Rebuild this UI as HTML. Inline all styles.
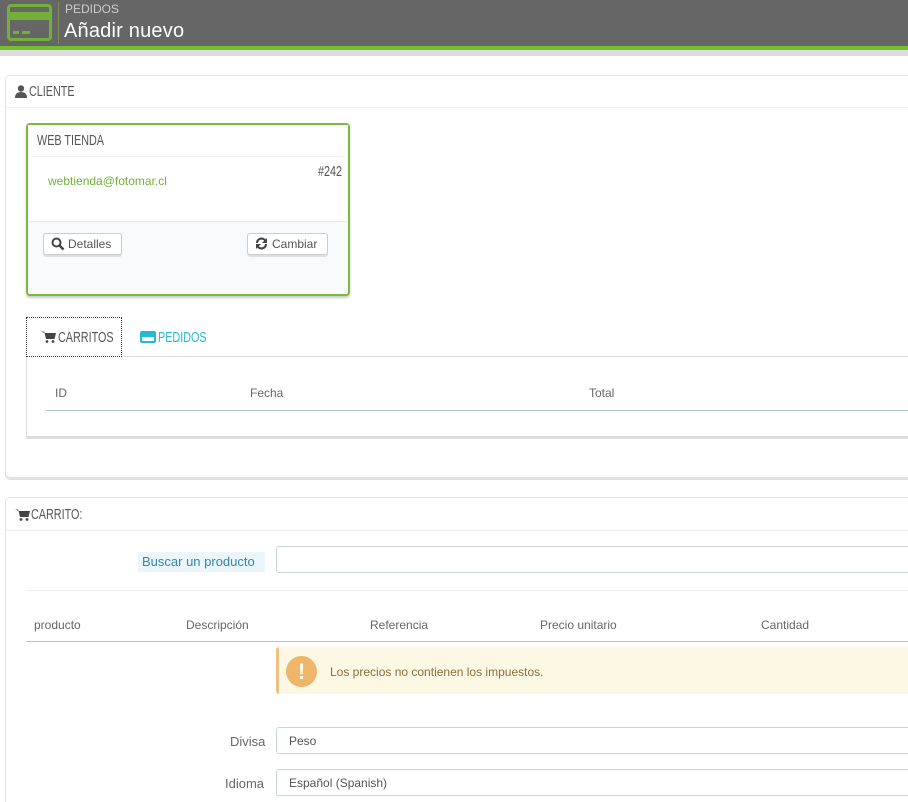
<!DOCTYPE html>
<html><head><meta charset="utf-8"><style>
*{box-sizing:border-box;margin:0;padding:0}
html,body{width:908px;height:802px;overflow:hidden}
body{background:#fff;font-family:"Liberation Sans",sans-serif;position:relative;color:#555}
.a{position:absolute}
.hd{left:0;top:0;width:908px;height:46px;background:#666}
.panel{border:1px solid #e3e3e3;border-radius:5px;box-shadow:0 2px 0 #e0e0e0;border-right:none;background:#fff}
.ptitle{font-size:15px;color:#555;transform:scaleX(.72);transform-origin:left top;white-space:nowrap}
.btn{border:1px solid #ccc;border-radius:3px;background:#fff;box-shadow:0 2px 0 #e0e0e0;font-size:12px;color:#555;height:22px;line-height:20px;padding:0 6px}
.th{font-size:12px;color:#666}
.inp{border:1px solid #c7d6db;border-radius:3px;border-right:none;background:#fff;font-size:12px;color:#555;padding-left:12px}
</style></head><body>
<div class="a hd"></div>
<div class="a" style="left:0;top:46px;width:908px;height:4px;background:#72c02c"></div>
<div class="a" style="left:0;top:50px;width:908px;height:6px;background:#dcdcdc"></div>
<div class="a" style="left:7px;top:4px;width:45px;height:37px;border:3px solid #72b03a;border-radius:4px"></div>
<div class="a" style="left:10px;top:12px;width:39px;height:8px;background:#72b03a"></div>
<div class="a" style="left:13px;top:31px;width:6px;height:3px;background:#72b03a"></div>
<div class="a" style="left:22px;top:31px;width:8px;height:3px;background:#72b03a"></div>
<div class="a" style="left:58px;top:2px;width:1px;height:42px;background:#7a8a5a"></div>
<div class="a" style="left:65px;top:2px;font-size:12px;color:#ccc">PEDIDOS</div>
<div class="a" style="left:64px;top:20px;font-size:20px;color:#fff;letter-spacing:.2px">Añadir nuevo</div>

<div class="a panel" style="left:5px;top:75px;width:910px;height:403px"></div>
<div class="a" style="left:6px;top:107px;width:902px;height:1px;background:#eee"></div>
<svg class="a" style="left:15px;top:85px" width="12" height="13" viewBox="0 0 12 13"><circle cx="6" cy="3.5" r="3.2" fill="#555"/><path d="M0 13 Q0 7 6 7 Q12 7 12 13Z" fill="#555"/></svg>
<div class="a ptitle" style="left:29px;top:83px">CLIENTE</div>

<div class="a" style="left:26px;top:123px;width:324px;height:173px;border:2px solid #7cba3f;border-radius:4px;background:#f8fafc;box-shadow:0 2px 2px #ccc"></div>
<div class="a" style="left:28px;top:125px;width:320px;height:96px;background:#fff"></div>
<div class="a" style="left:32px;top:156px;width:312px;height:1px;background:#eee"></div>
<div class="a" style="left:28px;top:221px;width:320px;height:1px;background:#e6e6e6"></div>
<div class="a ptitle" style="left:37px;top:132px">WEB TIENDA</div>
<div class="a ptitle" style="left:318px;top:163px">#242</div>
<div class="a" style="left:48px;top:174px;font-size:12px;color:#72b03a">webtienda@fotomar.cl</div>
<div class="a btn" style="left:43px;top:233px;width:79px;padding-left:24px">Detalles</div>
<svg class="a" style="left:51px;top:237px" width="14" height="14" viewBox="0 0 14 14"><circle cx="5.5" cy="5.5" r="4" fill="none" stroke="#444" stroke-width="2"/><path d="M8.5 8.5L12.5 12.5" stroke="#444" stroke-width="2.5"/></svg>
<div class="a btn" style="left:247px;top:233px;width:81px;padding-left:24px">Cambiar</div>
<svg class="a" style="left:255px;top:237px" width="13" height="13" viewBox="0 0 13 13"><path d="M2 6A4.5 4.5 0 0 1 10.5 4" fill="none" stroke="#444" stroke-width="2.2"/><path d="M11 7A4.5 4.5 0 0 1 2.5 9" fill="none" stroke="#444" stroke-width="2.2"/><path d="M12 1V6H7Z" fill="#444"/><path d="M1 12V7H6Z" fill="#444"/></svg>

<div class="a" style="left:26px;top:356px;width:890px;height:81px;border:1px solid #ddd;border-right:none;box-shadow:0 2px 0 #e0e0e0"></div>
<div class="a" style="left:26px;top:317px;width:96px;height:40px;border:1px dotted #333;background:#fff"></div>
<svg class="a" style="left:41px;top:331px" width="15" height="12" viewBox="0 0 15 12"><path d="M0 0.5H3.2L5 8H13.5L15 2H3.6Z" fill="#444"/><circle cx="6" cy="10.5" r="1.4" fill="#444"/><circle cx="12" cy="10.5" r="1.4" fill="#444"/></svg>
<div class="a ptitle" style="left:58px;top:329px">CARRITOS</div>
<div class="a" style="left:140px;top:331px;width:16px;height:12px;border:2px solid #25b9d7;border-radius:2px;background:#25b9d7"></div>
<div class="a" style="left:142px;top:337px;width:12px;height:4px;background:#fff"></div>
<div class="a ptitle" style="left:158px;top:329px;color:#25b9d7">PEDIDOS</div>
<div class="a th" style="left:55px;top:386px">ID</div>
<div class="a th" style="left:250px;top:386px">Fecha</div>
<div class="a th" style="left:589px;top:386px">Total</div>
<div class="a" style="left:46px;top:410px;width:862px;height:1px;background:#a6c8d8"></div>

<div class="a panel" style="left:5px;top:497px;width:910px;height:320px"></div>
<div class="a" style="left:6px;top:530px;width:902px;height:1px;background:#eee"></div>
<svg class="a" style="left:15px;top:509px" width="15" height="12" viewBox="0 0 15 12"><path d="M0 0.5H3.2L5 8H13.5L15 2H3.6Z" fill="#444"/><circle cx="6" cy="10.5" r="1.4" fill="#444"/><circle cx="12" cy="10.5" r="1.4" fill="#444"/></svg>
<div class="a ptitle" style="left:31px;top:506px">CARRITO:</div>
<div class="a" style="left:138px;top:552px;width:127px;height:20px;background:#eaf6fa;color:#3586ae;font-size:13px;line-height:20px;padding-left:4px">Buscar un producto</div>
<div class="a inp" style="left:276px;top:546px;width:640px;height:27px"></div>
<div class="a" style="left:26px;top:590px;width:882px;height:1px;background:#eee"></div>
<div class="a th" style="left:34px;top:618px">producto</div>
<div class="a th" style="left:186px;top:618px">Descripción</div>
<div class="a th" style="left:370px;top:618px">Referencia</div>
<div class="a th" style="left:540px;top:618px">Precio unitario</div>
<div class="a th" style="left:761px;top:618px">Cantidad</div>
<div class="a" style="left:26px;top:641px;width:882px;height:1px;background:#a6c8d8"></div>
<div class="a" style="left:276px;top:647px;width:640px;height:47px;background:#fcf8e3;border-left:3px solid #f0c080;border-radius:3px 0 0 3px"></div>
<div class="a" style="left:286px;top:656px;width:31px;height:31px;border-radius:50%;background:#efb56a;color:#fff8ea;font-weight:bold;font-size:22px;text-align:center;line-height:31px">!</div>
<div class="a" style="left:330px;top:665px;font-size:12px;color:#8a6d3b">Los precios no contienen los impuestos.</div>
<div class="a th" style="left:230px;top:734px;font-size:13px">Divisa</div>
<div class="a inp" style="left:276px;top:727px;width:640px;height:27px;line-height:27px">Peso</div>
<div class="a th" style="left:225px;top:776px;font-size:13px">Idioma</div>
<div class="a inp" style="left:276px;top:769px;width:640px;height:27px;line-height:27px">Español (Spanish)</div>
</body></html>
